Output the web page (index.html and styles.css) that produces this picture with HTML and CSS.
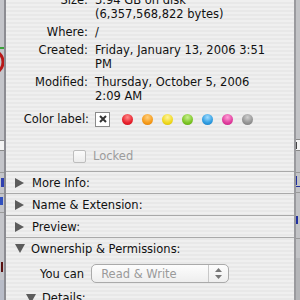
FILE: index.html
```html
<!DOCTYPE html>
<html>
<head>
    <title>Info</title>
    <link rel="stylesheet" href="styles.css">
</head>
<body>
<div class="screen">
    <svg class="edge" width="6" height="300" viewBox="0 0 6 300">
        <rect width="6" height="300" fill="#c4c5ca"/>
        <rect x="0" y="47" width="6" height="2" fill="#3aa23a"/>
        <circle cx="-9" cy="62" r="12" fill="none" stroke="#b81818" stroke-width="3"/>
        <rect x="0" y="140" width="6" height="1" fill="#8a8a8a"/>
        <rect x="0" y="141" width="6" height="9" fill="#f4f4f4"/>
        <rect x="0" y="150" width="6" height="1" fill="#8a8a8a"/>
        <rect x="0" y="172" width="6" height="1" fill="#9a9a9a"/>
        <rect x="1" y="178" width="3" height="9" fill="#3040b0"/>
        <rect x="0" y="193" width="6" height="1" fill="#9a9a9a"/>
        <rect x="0" y="197" width="3" height="8" fill="#3050c0"/>
        <rect x="0" y="212" width="6" height="1" fill="#9a9a9a"/>
        <rect x="1" y="262" width="2" height="10" fill="#5a1010"/>
        <rect x="0" y="280" width="6" height="20" fill="#b8bcc8"/>
        <rect x="4" y="0" width="2" height="300" fill="#8c8c92"/>
    </svg>

    <div class="panel">
        <div class="info">
            <span class="lbl">Size:</span><span class="val">3.94 GB on disk<br>(6,357,568,822 bytes)</span>
            <span class="lbl">Where:</span><span class="val">/</span>
            <span class="lbl">Created:</span><span class="val">Friday, January 13, 2006 3:51<br>PM</span>
            <span class="lbl">Modified:</span><span class="val">Thursday, October 5, 2006<br>2:09 AM</span>
        </div>

        <div class="color-row">
            <span class="lbl">Color label:</span>
            <span class="none-box">
                <svg width="8" height="8" viewBox="0 0 8 8"><path d="M1 1L7 7M7 1L1 7" stroke="#333" stroke-width="2"/></svg>
            </span>
            <div class="dots">
                <span class="dot red"></span>
                <span class="dot orange"></span>
                <span class="dot yellow"></span>
                <span class="dot green"></span>
                <span class="dot blue"></span>
                <span class="dot pink"></span>
                <span class="dot gray"></span>
            </div>
        </div>

        <div class="locked">
            <span class="check"></span>
            <span>Locked</span>
        </div>

        <div class="section"><span class="tri-right"></span>More Info:</div>
        <div class="section"><span class="tri-right"></span>Name &amp; Extension:</div>
        <div class="section"><span class="tri-right"></span>Preview:</div>
        <div class="section open"><span class="tri-down"></span>Ownership &amp; Permissions:</div>

        <div class="perm-row">
            <span class="perm-lbl">You can</span>
            <div class="popup">
                <span class="popup-text">Read &amp; Write</span>
                <span class="popup-arrows">
                    <svg width="7" height="11" viewBox="0 0 7 11"><path d="M3.5 0L7 4H0Z M3.5 11L7 7H0Z" fill="#777"/></svg>
                </span>
            </div>
        </div>

        <div class="details"><span class="tri-down"></span>Details:</div>
    </div>

    <svg class="edge" width="6" height="300" viewBox="0 0 6 300">
        <rect width="6" height="300" fill="#c2c3c6"/>
        <rect x="0" y="0" width="2" height="300" fill="#9a9a9e"/>
        <rect x="2" y="139" width="4" height="1" fill="#888"/>
        <rect x="2" y="140" width="4" height="10" fill="#f2f2f2"/>
        <rect x="2" y="142" width="1" height="7" fill="#444"/>
        <rect x="2" y="150" width="4" height="1" fill="#888"/>
        <rect x="2" y="172" width="4" height="1" fill="#999"/>
        <rect x="2" y="176" width="1" height="9" fill="#2030a0"/>
        <rect x="2" y="186" width="4" height="1" fill="#2030a0"/>
        <rect x="2" y="192" width="4" height="1" fill="#999"/>
        <rect x="2" y="216" width="2" height="8" fill="#2030a0"/>
        <rect x="2" y="238" width="4" height="1" fill="#999"/>
        <rect x="2" y="258" width="4" height="42" fill="#b4b5b8"/>
    </svg>
</div>
</body>
</html>
```

FILE: styles.css
```css
body {
    margin: 0;
    overflow: hidden;
}

.screen {
    display: flex;
    width: 300px;
    height: 300px;
    overflow: hidden;
    font-family: "DejaVu Sans", "Liberation Sans", sans-serif;
    font-size: 11.5px;
    color: #111;
}

.edge {
    display: block;
    flex: none;
}

.panel {
    width: 288px;
    flex: none;
    background: repeating-linear-gradient(to bottom, #efefef 0, #efefef 2px, #e8e8e8 2px, #e8e8e8 4px);
}

.info {
    display: grid;
    grid-template-columns: 82px 1fr;
    column-gap: 7px;
    row-gap: 4px;
    margin-top: -7px;
    line-height: 14px;
}

.lbl {
    text-align: right;
}

.color-row {
    display: flex;
    align-items: center;
    height: 18px;
    margin-top: 7px;
}

.color-row .lbl {
    width: 83px;
    flex: none;
}

.none-box {
    display: flex;
    align-items: center;
    justify-content: center;
    width: 13px;
    height: 13px;
    margin-left: 6px;
    background: #fff;
    border: 1px solid #8a8a8a;
}

.dots {
    display: flex;
    gap: 9px;
    margin-left: 12px;
}

.dot {
    width: 11px;
    height: 11px;
    border-radius: 50%;
}

.red { background: radial-gradient(circle at 50% 30%, #ff8a8a, #e8202c 60%, #c01018); }
.orange { background: radial-gradient(circle at 50% 30%, #ffd080, #f59a18 60%, #d87a08); }
.yellow { background: radial-gradient(circle at 50% 30%, #fff4a0, #efd81c 60%, #d0b808); }
.green { background: radial-gradient(circle at 50% 30%, #c8f090, #7cc424 60%, #5aa010); }
.blue { background: radial-gradient(circle at 50% 30%, #a0dcff, #2e9ce0 60%, #1878c0); }
.pink { background: radial-gradient(circle at 50% 30%, #ffa0d8, #e03c9c 60%, #c02080); }
.gray { background: radial-gradient(circle at 50% 30%, #d0d0d0, #939393 60%, #777); }

.locked {
    display: flex;
    align-items: center;
    gap: 7px;
    height: 14px;
    margin: 21px 0 8px 67px;
    color: #9c9c9c;
}

.check {
    width: 11px;
    height: 11px;
    border: 1px solid #bdbdbd;
    border-radius: 2px;
    background: linear-gradient(#fbfbfb, #ececec);
}

.section {
    display: flex;
    align-items: center;
    height: 21px;
    border-top: 1px solid #a9a9a9;
}

.tri-right {
    width: 0;
    height: 0;
    margin: 0 8px 0 9px;
    border-top: 5px solid transparent;
    border-bottom: 5px solid transparent;
    border-left: 9px solid #5c5c5c;
}

.tri-down {
    width: 0;
    height: 0;
    margin: 0 6px 0 9px;
    border-left: 5px solid transparent;
    border-right: 5px solid transparent;
    border-top: 9px solid #5c5c5c;
}

.perm-row {
    display: flex;
    align-items: center;
    gap: 7px;
    margin: 5px 0 0 34px;
}

.popup {
    display: flex;
    align-items: center;
    width: 136px;
    height: 17px;
    border: 1px solid #aaa;
    border-radius: 5px;
    background: linear-gradient(#fdfdfd, #eeeeee);
}

.popup-text {
    flex: 1;
    padding-left: 9px;
    color: #9a9a9a;
}

.popup-arrows {
    display: flex;
    align-items: center;
    justify-content: center;
    width: 19px;
    height: 17px;
    border-left: 1px solid #c8c8c8;
}

.details {
    display: flex;
    align-items: center;
    height: 14px;
    margin: 8px 0 0 11px;
}
```
